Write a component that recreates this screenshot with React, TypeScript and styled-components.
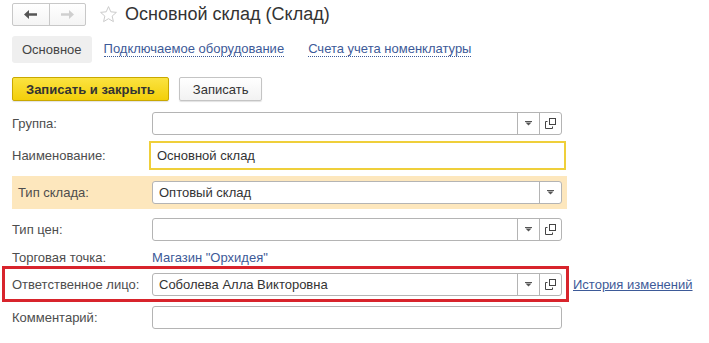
import React from "react";
import styled, { createGlobalStyle } from "styled-components";

const GlobalStyle = createGlobalStyle`
  body {
    margin: 0;
    background: #fff;
    font-family: "Liberation Sans", Arial, sans-serif;
    font-size: 13px;
    color: #4d4d4d;
  }
`;

const Page = styled.div`
  width: 709px;
  height: 343px;
  overflow: hidden;
  padding: 3px 0 0 12px;
  box-sizing: border-box;
`;

/* Шапка: навигация, звезда и заголовок */
const Header = styled.div`
  display: flex;
  align-items: center;
  height: 23px;
`;

const NavGroup = styled.div`
  display: flex;
  width: 74px;
  height: 23px;
  box-sizing: border-box;
  border: 1px solid #c8c8c8;
  border-radius: 2px;
  background: linear-gradient(#ffffff, #f4f4f4);
`;

const NavButton = styled.div<{ $first?: boolean }>`
  flex: 1;
  display: flex;
  align-items: center;
  justify-content: center;
  border-right: ${(p) => (p.$first ? "1px solid #c8c8c8" : "none")};
`;

const StarBox = styled.div`
  margin-left: 13px;
  display: flex;
  align-items: center;
`;

const Title = styled.div`
  margin-left: 7px;
  font-size: 18px;
  color: #333;
  line-height: 23px;
`;

const Tabs = styled.div`
  display: flex;
  align-items: center;
  margin-top: 10px;
  height: 27px;
`;

const Tab = styled.div<{ $active?: boolean }>`
  height: 27px;
  display: flex;
  align-items: center;
  padding: 0 ${(p) => (p.$active ? "10px" : "0")};
  margin-right: ${(p) => (p.$active ? "12px" : "24px")};
  background: ${(p) => (p.$active ? "#efefef" : "transparent")};
  border-radius: 3px;
  color: ${(p) => (p.$active ? "#444" : "#3d5a98")};
  span {
    border-bottom: ${(p) => (p.$active ? "none" : "1px dotted #3d5a98")};
    line-height: 14px;
  }
`;

const Toolbar = styled.div`
  display: flex;
  margin-top: 14px;
  gap: 10px;
`;

const Button = styled.div<{ $primary?: boolean }>`
  height: 24px;
  box-sizing: border-box;
  display: flex;
  align-items: center;
  padding: 0 ${(p) => (p.$primary ? "13px" : "13px")};
  border-radius: 2px;
  border: 1px solid ${(p) => (p.$primary ? "#c9a800" : "#c4c4c4")};
  background: ${(p) =>
    p.$primary
      ? "linear-gradient(#fbe341, #f3cf0a)"
      : "linear-gradient(#ffffff, #f2f2f2)"};
  color: #333;
  font-weight: ${(p) => (p.$primary ? "bold" : "normal")};
  box-shadow: 0 1px 1px rgba(0, 0, 0, 0.12);
`;

const Form = styled.div`
  display: flex;
  flex-direction: column;
  margin-top: 11px;
`;

const Row = styled.div<{ $h: number; $mt?: number }>`
  display: grid;
  grid-template-columns: 140px 410px;
  align-items: center;
  height: ${(p) => p.$h}px;
  margin-top: ${(p) => p.$mt ?? 0}px;
`;

const ShadedRow = styled(Row)`
  width: 555px;
  padding-left: 6px;
  box-sizing: border-box;
  grid-template-columns: 134px 410px;
  background: #fde7bd;
`;

const HighlightWrap = styled.div`
  display: flex;
  align-items: center;
  margin-left: -10px;
`;

const HighlightBox = styled.div`
  width: 567px;
  height: 36px;
  box-sizing: border-box;
  border: 3px solid #d8242c;
  padding-left: 7px;
  display: grid;
  grid-template-columns: 140px 410px;
  align-items: center;
`;

const Label = styled.div`
  color: #4d4d4d;
  white-space: nowrap;
`;

const Field = styled.div<{ $focused?: boolean }>`
  display: flex;
  height: ${(p) => (p.$focused ? "29px" : "23px")};
  width: ${(p) => (p.$focused ? "417px" : "410px")};
  margin-left: ${(p) => (p.$focused ? "-3px" : "0")};
  box-sizing: border-box;
  border: ${(p) => (p.$focused ? "2px solid #efcf3a" : "1px solid #b4b4b4")};
  border-radius: ${(p) => (p.$focused ? "0" : "3px")};
  background: #fff;
  overflow: hidden;
`;

const FieldText = styled.div`
  flex: 1;
  display: flex;
  align-items: center;
  padding-left: 6px;
  color: #333;
  white-space: nowrap;
`;

const FieldButton = styled.div`
  width: 21px;
  display: flex;
  align-items: center;
  justify-content: center;
  border-left: 1px solid #b4b4b4;
`;

const Link = styled.span<{ $solid?: boolean }>`
  color: #3d5a98;
  text-decoration: ${(p) => (p.$solid ? "underline" : "none")};
  white-space: nowrap;
`;

const SideLink = styled(Link)`
  margin-left: 4px;
`;

const DropIcon = () => (
  <svg width="7" height="5" viewBox="0 0 7 5">
    <rect x="0" y="0" width="7" height="1" fill="#555" />
    <path d="M0.5 1.5 H6.5 L3.5 4.5 Z" fill="#555" />
  </svg>
);

const OpenIcon = () => (
  <svg width="11" height="11" viewBox="0 0 11 11" fill="none" stroke="#444" strokeWidth="1">
    <rect x="4.5" y="0.5" width="6" height="6" />
    <path d="M2.5 3.5 H0.5 V10.5 H7.5 V8.5" />
  </svg>
);

const Select = ({ value, open = true }: { value?: string; open?: boolean }) => (
  <Field>
    <FieldText>{value}</FieldText>
    <FieldButton>
      <DropIcon />
    </FieldButton>
    {open && (
      <FieldButton>
        <OpenIcon />
      </FieldButton>
    )}
  </Field>
);

export default function App() {
  return (
    <Page>
      <GlobalStyle />
      <Header>
        <NavGroup>
          <NavButton $first>
            <svg width="13" height="9" viewBox="0 0 13 9">
              <path d="M0 4.5 L5 0 V3.3 H13 V5.7 H5 V9 Z" fill="#555" />
            </svg>
          </NavButton>
          <NavButton>
            <svg width="13" height="9" viewBox="0 0 13 9">
              <path d="M13 4.5 L8 0 V3.3 H0 V5.7 H8 V9 Z" fill="#cfcfcf" />
            </svg>
          </NavButton>
        </NavGroup>
        <StarBox>
          <svg width="19" height="19" viewBox="0 0 24 24" fill="none" stroke="#c8c8c8" strokeWidth="1.2">
            <path d="M12 2 L14.9 8.6 L22 9.3 L16.6 14 L18.2 21 L12 17.3 L5.8 21 L7.4 14 L2 9.3 L9.1 8.6 Z" />
          </svg>
        </StarBox>
        <Title>Основной склад (Склад)</Title>
      </Header>

      <Tabs>
        <Tab $active>
          <span>Основное</span>
        </Tab>
        <Tab>
          <span>Подключаемое оборудование</span>
        </Tab>
        <Tab>
          <span>Счета учета номенклатуры</span>
        </Tab>
      </Tabs>

      <Toolbar>
        <Button $primary>Записать и закрыть</Button>
        <Button>Записать</Button>
      </Toolbar>

      <Form>
        <Row $h={23}>
          <Label>Группа:</Label>
          <Select />
        </Row>
        <Row $h={29} $mt={6}>
          <Label>Наименование:</Label>
          <Field $focused>
            <FieldText>Основной склад</FieldText>
          </Field>
        </Row>
        <ShadedRow $h={33} $mt={6}>
          <Label>Тип склада:</Label>
          <Select value="Оптовый склад" open={false} />
        </ShadedRow>
        <Row $h={23} $mt={9}>
          <Label>Тип цен:</Label>
          <Select />
        </Row>
        <Row $h={18} $mt={7}>
          <Label>Торговая точка:</Label>
          <Link>Магазин "Орхидея"</Link>
        </Row>
        <HighlightWrap>
          <HighlightBox>
            <Label>Ответственное лицо:</Label>
            <Select value="Соболева Алла Викторовна" />
          </HighlightBox>
          <SideLink $solid>История изменений</SideLink>
        </HighlightWrap>
        <Row $h={23} $mt={4}>
          <Label>Комментарий:</Label>
          <Field />
        </Row>
      </Form>
    </Page>
  );
}
